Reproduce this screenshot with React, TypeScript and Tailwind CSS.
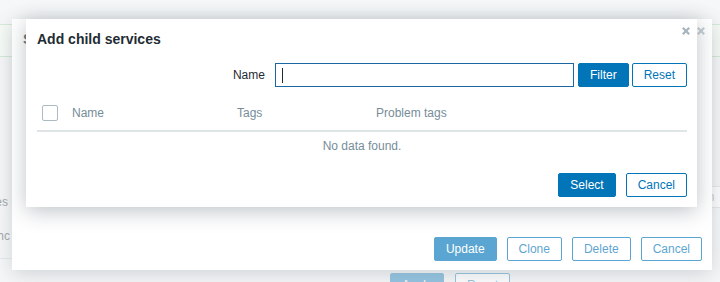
import React from "react";

function Btn({
  children,
  primary,
}: {
  children: React.ReactNode;
  primary?: boolean;
}) {
  return (
    <button
      className={
        primary
          ? "h-[24px] px-[11px] border border-[#0275b8] bg-[#0275b8] text-white rounded-[2px] text-[12px] leading-[22px] whitespace-nowrap"
          : "h-[24px] px-[11px] border border-[#0275b8] bg-white text-[#0275b8] rounded-[2px] text-[12px] leading-[22px] whitespace-nowrap"
      }
    >
      {children}
    </button>
  );
}

function CloseX({ className }: { className: string }) {
  return (
    <svg
      className={className}
      width="8"
      height="8"
      viewBox="0 0 8 8"
      fill="none"
      stroke="#a7b5bd"
      strokeWidth="2.2"
      strokeLinecap="butt"
    >
      <line x1="0.8" y1="0.8" x2="7.2" y2="7.2" />
      <line x1="7.2" y1="0.8" x2="0.8" y2="7.2" />
    </svg>
  );
}

export default function App() {
  return (
    <div className="relative w-[720px] h-[282px] overflow-hidden bg-[#ebeef0] text-[12px] text-[#1f2c33] font-['Liberation_Sans',Arial,sans-serif]">
      {/* Underlying page */}
      <div className="flex flex-col">
        <div className="mt-[24px] h-[33px] border-y border-[#9fcfa6] bg-[#eef7ef]" />
        <div className="mt-[129px] flex items-start h-[22px]">
          <div className="w-[8px] flex justify-end whitespace-nowrap mt-[9px] leading-[14px]">
            Child services
          </div>
          <div className="ml-auto w-[20px] h-[22px] border-y border-[#c5ced3] bg-white pl-[1px] leading-[20px] text-[#768d99] whitespace-nowrap overflow-hidden">
            on
          </div>
        </div>
        <div className="mt-[20px] flex h-[16px]">
          <div className="w-[10px] flex justify-end whitespace-nowrap leading-[16px]">
            Show only roots hc
          </div>
        </div>
        <div className="mt-[14px] h-0 border-b border-[#c5ced3] w-[40px]" />
        <div className="mt-[14px] flex pl-[390px] gap-[11px]">
          <Btn primary>Apply</Btn>
          <Btn>Reset</Btn>
        </div>
      </div>

      {/* First overlay */}
      <div className="absolute inset-0 bg-white/35" />

      {/* Back dialog */}
      <div className="absolute left-[12px] top-[19px] w-[700px] h-[251px] bg-white shadow-[0_4px_20px_rgba(20,40,55,0.28)] flex flex-col pl-[11px] pr-[10px]">
        <CloseX className="absolute right-[7px] top-[8px]" />
        <div className="pt-[12px] text-[14px] leading-[17px] font-bold">
          Service
        </div>
        <div className="mt-auto pb-[9px] flex justify-end gap-[10px]">
          <Btn primary>Update</Btn>
          <Btn>Clone</Btn>
          <Btn>Delete</Btn>
          <Btn>Cancel</Btn>
        </div>
      </div>

      {/* Second overlay */}
      <div className="absolute inset-0 bg-white/35" />

      {/* Top dialog */}
      <div className="absolute left-[26px] top-[19px] w-[671px] h-[188px] bg-white shadow-[0_4px_20px_rgba(20,40,55,0.28)] flex flex-col pl-[11px] pr-[10px]">
        <CloseX className="absolute right-[7px] top-[8px]" />
        <div className="pt-[12px] text-[14px] leading-[17px] font-bold text-[#1f2c33]">
          Add child services
        </div>

        <div className="mt-[15px] flex items-center justify-end h-[24px]">
          <span className="text-[#1f2c33]">Name</span>
          <div className="ml-[10px] w-[299px] h-[24px] border border-[#1a67a3] bg-white flex items-center pl-[6px]">
            <div className="w-[1px] h-[15px] bg-[#1f2c33]" />
          </div>
          <div className="ml-[4px]">
            <Btn primary>Filter</Btn>
          </div>
          <div className="ml-[3px]">
            <Btn>Reset</Btn>
          </div>
        </div>

        <div className="mt-[9px] flex items-center h-[36px] border-b-2 border-[#dfe4e7] text-[#768d99]">
          <div className="w-[35px] pl-[5px] flex items-center">
            <div className="w-[16px] h-[16px] border border-[#acbbc2] rounded-[2px] bg-white" />
          </div>
          <div className="w-[165px]">Name</div>
          <div className="w-[139px]">Tags</div>
          <div>Problem tags</div>
        </div>

        <div className="h-[28px] flex items-center justify-center text-[#768d99]">
          No data found.
        </div>

        <div className="mt-auto pb-[10px] flex justify-end gap-[10px]">
          <Btn primary>Select</Btn>
          <Btn>Cancel</Btn>
        </div>
      </div>
    </div>
  );
}
